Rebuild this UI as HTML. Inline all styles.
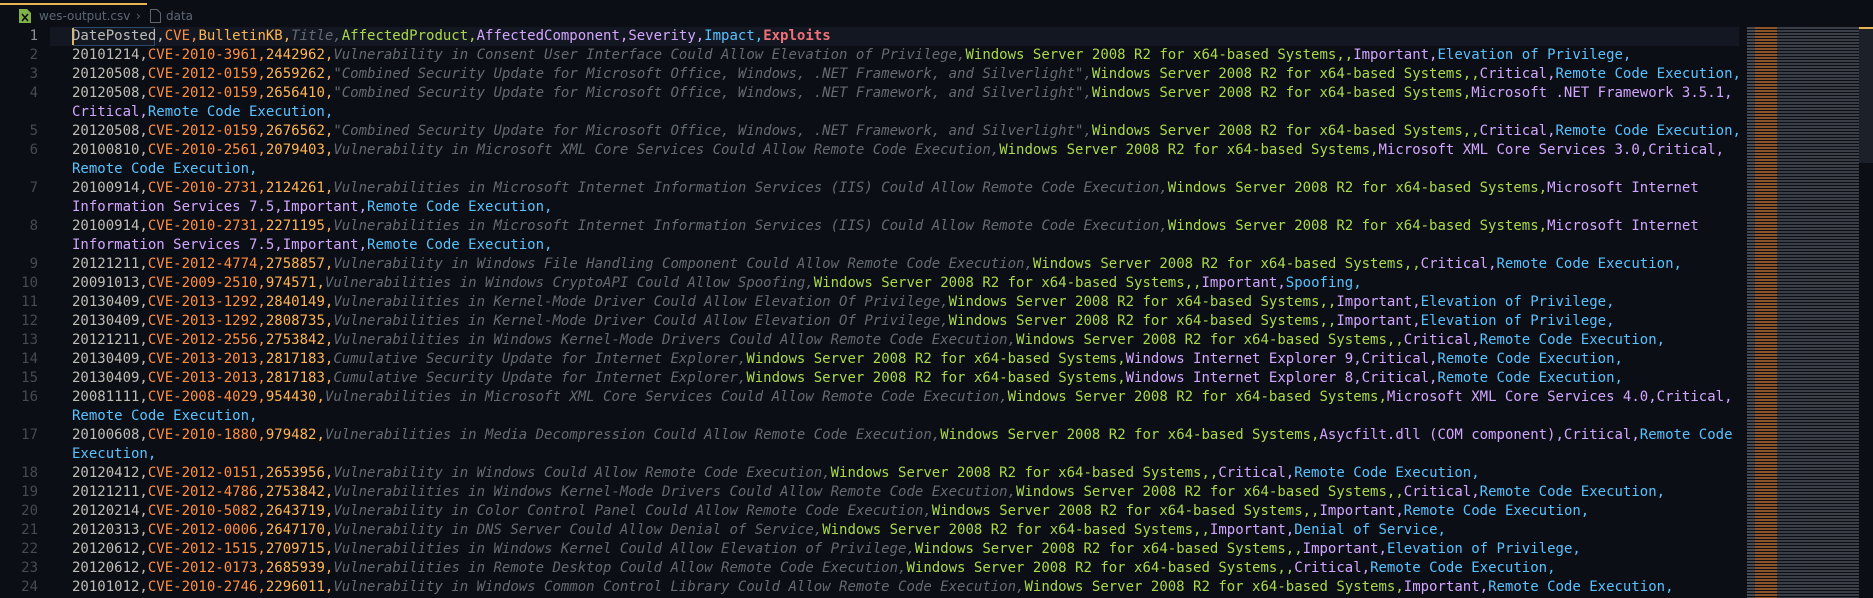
<!DOCTYPE html>
<html><head><meta charset="utf-8"><style>
html,body{margin:0;padding:0;}
body{width:1873px;height:598px;background:#0b0e14;overflow:hidden;position:relative;font-family:"DejaVu Sans Mono","Liberation Mono",monospace;}
.top{position:absolute;left:0;width:147px;height:2px;background:#e6b450;top:3px;}
.crumb{position:absolute;top:6px;left:0;width:300px;height:20px;font-family:"DejaVu Sans","Liberation Sans",sans-serif;font-size:12px;color:#5c6773;line-height:20px;white-space:nowrap;}
.code{position:absolute;left:0;top:27px;font-size:14px;line-height:19px;}
.r{height:19px;position:relative;width:1740px;}
.n{position:absolute;left:0;width:38px;text-align:right;color:#454a53;white-space:nowrap;}
.t{position:absolute;left:72px;color:#bfbdb6;white-space:pre;}
.a{color:#bfbdb6}.c{color:#ff8f40}.k{color:#ffb454}.i{font-style:italic;color:#646a72}
.g{color:#aad94c}.p{color:#d2a6ff}.b{color:#59c2ff}.x{color:#f07178;font-weight:bold}
.hl{position:absolute;left:50px;top:27px;width:1689px;height:19px;background:#131721;}
.mm{position:absolute;left:1747px;top:27px;width:112px;height:571px;
background:linear-gradient(90deg,#5a5f66 0 8px,#b86a30 8px 30px,#4a4f58 30px 112px);opacity:.75;}
.mmlines{position:absolute;left:1747px;top:27px;width:112px;height:571px;background:repeating-linear-gradient(180deg,transparent 0 2px,#0b0e14 2px 3px);}
.sb{position:absolute;left:1859px;top:27px;width:14px;height:136px;background:#1c2129;}
.sbt{position:absolute;left:1859px;top:27px;width:14px;height:2px;background:#e6b450;}
</style></head><body>
<div class="top"></div>
<div class="crumb">
<svg style="position:absolute;left:19px;top:3px" width="12" height="14" viewBox="0 0 12 14"><path d="M0 0h8l4 4v10H0z" fill="#7fb347"/><path d="M3 5l6 7M9 5l-6 7" stroke="#0b0e14" stroke-width="1.6"/></svg>
<span style="position:absolute;left:39px">wes-output.csv</span>
<span style="position:absolute;left:136px">›</span>
<svg style="position:absolute;left:150px;top:3px" width="11" height="14" viewBox="0 0 11 14"><path d="M.5.5h6.5l3.5 3.5v9.5H.5z" fill="none" stroke="#5c6773"/></svg>
<span style="position:absolute;left:166px">data</span>
</div>
<div class="hl"></div>
<div style="position:absolute;left:73px;top:27px;width:82px;height:19px;border:1px solid #2d4a6b;box-sizing:border-box"></div>
<div style="position:absolute;left:72px;top:28px;width:2px;height:17px;background:#e6b450"></div>
<div class="code">
<div class="r"><span class="n" style="color:#8a8f98">1</span><span class="t"><span class="a">DatePosted,</span><span class="c">CVE,</span><span class="k">BulletinKB,</span><span class="i">Title,</span><span class="g">AffectedProduct,</span><span class="p">AffectedComponent,</span><span class="p">Severity,</span><span class="b">Impact,</span><span class="x">Exploits</span></span></div>
<div class="r"><span class="n">2</span><span class="t">20101214,<span class="c">CVE-2010-3961,</span><span class="k">2442962,</span><span class="i">Vulnerability in Consent User Interface Could Allow Elevation of Privilege,</span><span class="g">Windows Server 2008 R2 for x64-based Systems,,</span><span class="p">Important,</span><span class="b">Elevation of Privilege,</span></span></div>
<div class="r"><span class="n">3</span><span class="t">20120508,<span class="c">CVE-2012-0159,</span><span class="k">2659262,</span><span class="i">"Combined Security Update for Microsoft Office, Windows, .NET Framework, and Silverlight",</span><span class="g">Windows Server 2008 R2 for x64-based Systems,,</span><span class="p">Critical,</span><span class="b">Remote Code Execution,</span></span></div>
<div class="r"><span class="n">4</span><span class="t">20120508,<span class="c">CVE-2012-0159,</span><span class="k">2656410,</span><span class="i">"Combined Security Update for Microsoft Office, Windows, .NET Framework, and Silverlight",</span><span class="g">Windows Server 2008 R2 for x64-based Systems,</span><span class="p">Microsoft .NET Framework 3.5.1,</span></span></div>
<div class="r"><span class="t"><span class="p">Critical,</span><span class="b">Remote Code Execution,</span></span></div>
<div class="r"><span class="n">5</span><span class="t">20120508,<span class="c">CVE-2012-0159,</span><span class="k">2676562,</span><span class="i">"Combined Security Update for Microsoft Office, Windows, .NET Framework, and Silverlight",</span><span class="g">Windows Server 2008 R2 for x64-based Systems,,</span><span class="p">Critical,</span><span class="b">Remote Code Execution,</span></span></div>
<div class="r"><span class="n">6</span><span class="t">20100810,<span class="c">CVE-2010-2561,</span><span class="k">2079403,</span><span class="i">Vulnerability in Microsoft XML Core Services Could Allow Remote Code Execution,</span><span class="g">Windows Server 2008 R2 for x64-based Systems,</span><span class="p">Microsoft XML Core Services 3.0,Critical,</span></span></div>
<div class="r"><span class="t"><span class="b">Remote Code Execution,</span></span></div>
<div class="r"><span class="n">7</span><span class="t">20100914,<span class="c">CVE-2010-2731,</span><span class="k">2124261,</span><span class="i">Vulnerabilities in Microsoft Internet Information Services (IIS) Could Allow Remote Code Execution,</span><span class="g">Windows Server 2008 R2 for x64-based Systems,</span><span class="p">Microsoft Internet</span></span></div>
<div class="r"><span class="t"><span class="p">Information Services 7.5,Important,</span><span class="b">Remote Code Execution,</span></span></div>
<div class="r"><span class="n">8</span><span class="t">20100914,<span class="c">CVE-2010-2731,</span><span class="k">2271195,</span><span class="i">Vulnerabilities in Microsoft Internet Information Services (IIS) Could Allow Remote Code Execution,</span><span class="g">Windows Server 2008 R2 for x64-based Systems,</span><span class="p">Microsoft Internet</span></span></div>
<div class="r"><span class="t"><span class="p">Information Services 7.5,Important,</span><span class="b">Remote Code Execution,</span></span></div>
<div class="r"><span class="n">9</span><span class="t">20121211,<span class="c">CVE-2012-4774,</span><span class="k">2758857,</span><span class="i">Vulnerability in Windows File Handling Component Could Allow Remote Code Execution,</span><span class="g">Windows Server 2008 R2 for x64-based Systems,,</span><span class="p">Critical,</span><span class="b">Remote Code Execution,</span></span></div>
<div class="r"><span class="n">10</span><span class="t">20091013,<span class="c">CVE-2009-2510,</span><span class="k">974571,</span><span class="i">Vulnerabilities in Windows CryptoAPI Could Allow Spoofing,</span><span class="g">Windows Server 2008 R2 for x64-based Systems,,</span><span class="p">Important,</span><span class="b">Spoofing,</span></span></div>
<div class="r"><span class="n">11</span><span class="t">20130409,<span class="c">CVE-2013-1292,</span><span class="k">2840149,</span><span class="i">Vulnerabilities in Kernel-Mode Driver Could Allow Elevation Of Privilege,</span><span class="g">Windows Server 2008 R2 for x64-based Systems,,</span><span class="p">Important,</span><span class="b">Elevation of Privilege,</span></span></div>
<div class="r"><span class="n">12</span><span class="t">20130409,<span class="c">CVE-2013-1292,</span><span class="k">2808735,</span><span class="i">Vulnerabilities in Kernel-Mode Driver Could Allow Elevation Of Privilege,</span><span class="g">Windows Server 2008 R2 for x64-based Systems,,</span><span class="p">Important,</span><span class="b">Elevation of Privilege,</span></span></div>
<div class="r"><span class="n">13</span><span class="t">20121211,<span class="c">CVE-2012-2556,</span><span class="k">2753842,</span><span class="i">Vulnerabilities in Windows Kernel-Mode Drivers Could Allow Remote Code Execution,</span><span class="g">Windows Server 2008 R2 for x64-based Systems,,</span><span class="p">Critical,</span><span class="b">Remote Code Execution,</span></span></div>
<div class="r"><span class="n">14</span><span class="t">20130409,<span class="c">CVE-2013-2013,</span><span class="k">2817183,</span><span class="i">Cumulative Security Update for Internet Explorer,</span><span class="g">Windows Server 2008 R2 for x64-based Systems,</span><span class="p">Windows Internet Explorer 9,Critical,</span><span class="b">Remote Code Execution,</span></span></div>
<div class="r"><span class="n">15</span><span class="t">20130409,<span class="c">CVE-2013-2013,</span><span class="k">2817183,</span><span class="i">Cumulative Security Update for Internet Explorer,</span><span class="g">Windows Server 2008 R2 for x64-based Systems,</span><span class="p">Windows Internet Explorer 8,Critical,</span><span class="b">Remote Code Execution,</span></span></div>
<div class="r"><span class="n">16</span><span class="t">20081111,<span class="c">CVE-2008-4029,</span><span class="k">954430,</span><span class="i">Vulnerabilities in Microsoft XML Core Services Could Allow Remote Code Execution,</span><span class="g">Windows Server 2008 R2 for x64-based Systems,</span><span class="p">Microsoft XML Core Services 4.0,Critical,</span></span></div>
<div class="r"><span class="t"><span class="b">Remote Code Execution,</span></span></div>
<div class="r"><span class="n">17</span><span class="t">20100608,<span class="c">CVE-2010-1880,</span><span class="k">979482,</span><span class="i">Vulnerabilities in Media Decompression Could Allow Remote Code Execution,</span><span class="g">Windows Server 2008 R2 for x64-based Systems,</span><span class="p">Asycfilt.dll (COM component),Critical,</span><span class="b">Remote Code</span></span></div>
<div class="r"><span class="t"><span class="b">Execution,</span></span></div>
<div class="r"><span class="n">18</span><span class="t">20120412,<span class="c">CVE-2012-0151,</span><span class="k">2653956,</span><span class="i">Vulnerability in Windows Could Allow Remote Code Execution,</span><span class="g">Windows Server 2008 R2 for x64-based Systems,,</span><span class="p">Critical,</span><span class="b">Remote Code Execution,</span></span></div>
<div class="r"><span class="n">19</span><span class="t">20121211,<span class="c">CVE-2012-4786,</span><span class="k">2753842,</span><span class="i">Vulnerabilities in Windows Kernel-Mode Drivers Could Allow Remote Code Execution,</span><span class="g">Windows Server 2008 R2 for x64-based Systems,,</span><span class="p">Critical,</span><span class="b">Remote Code Execution,</span></span></div>
<div class="r"><span class="n">20</span><span class="t">20120214,<span class="c">CVE-2010-5082,</span><span class="k">2643719,</span><span class="i">Vulnerability in Color Control Panel Could Allow Remote Code Execution,</span><span class="g">Windows Server 2008 R2 for x64-based Systems,,</span><span class="p">Important,</span><span class="b">Remote Code Execution,</span></span></div>
<div class="r"><span class="n">21</span><span class="t">20120313,<span class="c">CVE-2012-0006,</span><span class="k">2647170,</span><span class="i">Vulnerability in DNS Server Could Allow Denial of Service,</span><span class="g">Windows Server 2008 R2 for x64-based Systems,,</span><span class="p">Important,</span><span class="b">Denial of Service,</span></span></div>
<div class="r"><span class="n">22</span><span class="t">20120612,<span class="c">CVE-2012-1515,</span><span class="k">2709715,</span><span class="i">Vulnerabilities in Windows Kernel Could Allow Elevation of Privilege,</span><span class="g">Windows Server 2008 R2 for x64-based Systems,,</span><span class="p">Important,</span><span class="b">Elevation of Privilege,</span></span></div>
<div class="r"><span class="n">23</span><span class="t">20120612,<span class="c">CVE-2012-0173,</span><span class="k">2685939,</span><span class="i">Vulnerabilities in Remote Desktop Could Allow Remote Code Execution,</span><span class="g">Windows Server 2008 R2 for x64-based Systems,,</span><span class="p">Critical,</span><span class="b">Remote Code Execution,</span></span></div>
<div class="r"><span class="n">24</span><span class="t">20101012,<span class="c">CVE-2010-2746,</span><span class="k">2296011,</span><span class="i">Vulnerability in Windows Common Control Library Could Allow Remote Code Execution,</span><span class="g">Windows Server 2008 R2 for x64-based Systems,</span><span class="p">Important,</span><span class="b">Remote Code Execution,</span></span></div>
</div>
<div class="mm"></div>
<div class="mmlines"></div>
<div class="sb"></div>
<div class="sbt"></div>
</body></html>
